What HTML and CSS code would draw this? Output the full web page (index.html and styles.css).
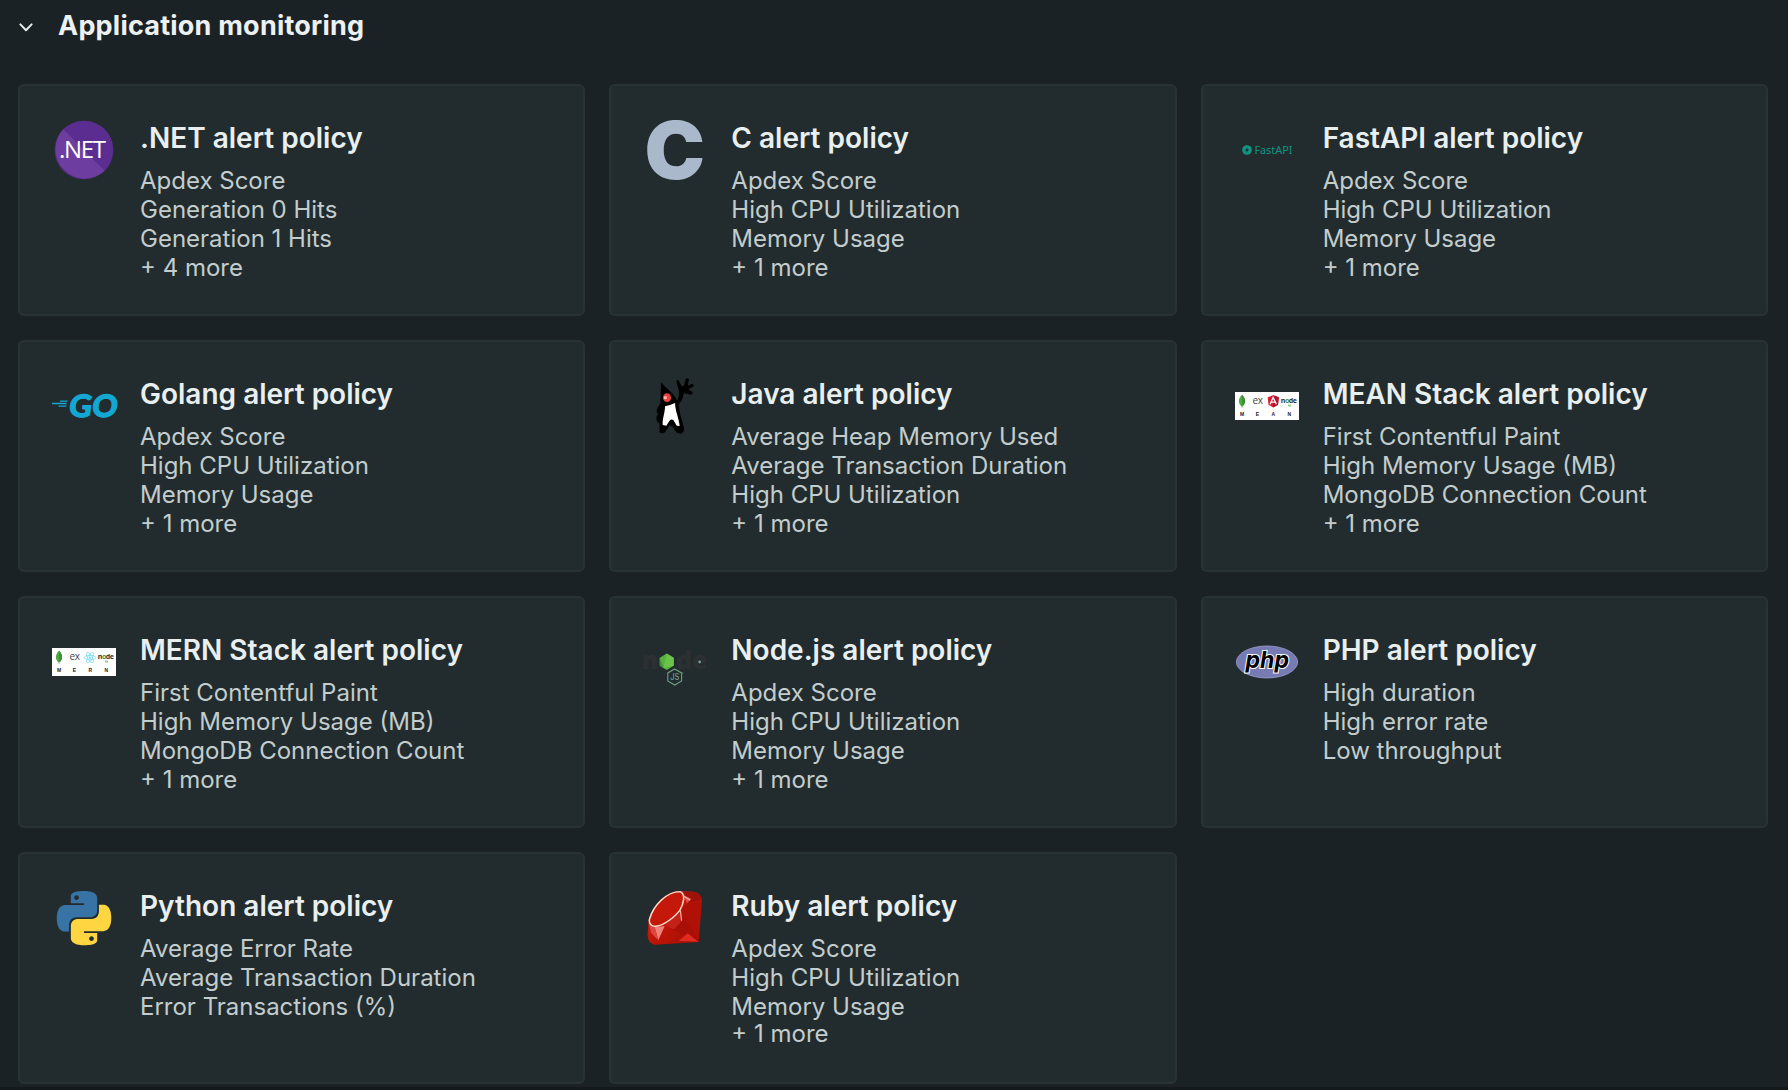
FILE: index.html
```html
<!DOCTYPE html>
<html lang="en">
<head>
<meta charset="utf-8">
<title>Application monitoring</title>
<link rel="stylesheet" href="styles.css">
</head>
<body>
<main class="page">
  <header class="section-header">
    <svg class="chevron" viewBox="0 0 14 10"><path d="M1.4 1.4 7 7.2 12.6 1.4"/></svg>
    <h1 class="section-title">Application monitoring</h1>
  </header>
  <section class="grid">
    <article class="card">
      <svg class="icon" viewBox="0 0 64 64">
        <circle cx="32" cy="32" r="29.3" fill="#5c2d91"/>
        <path d="M11.3 11.3A29.3 29.3 0 0 0 52.7 52.7Z" fill="#6d3da0"/>
        <text class="dotnet" x="7" y="40.3" textLength="47">.NET</text>
      </svg>
      <div class="body"><h2 class="title">.NET alert policy</h2>
        <ul class="list"><li>Apdex Score</li><li>Generation 0 Hits</li><li>Generation 1 Hits</li><li>+ 4 more</li></ul></div>
    </article>
    <article class="card">
      <svg class="icon" viewBox="0 0 64 64"><text class="c-mark" x="1.6" y="61.3" textLength="60.5" lengthAdjust="spacingAndGlyphs">C</text></svg>
      <div class="body"><h2 class="title">C alert policy</h2>
        <ul class="list"><li>Apdex Score</li><li>High CPU Utilization</li><li>Memory Usage</li><li>+ 1 more</li></ul></div>
    </article>
    <article class="card">
      <svg class="icon" viewBox="0 0 64 64">
        <circle cx="12" cy="32" r="4.8" fill="#109582"/>
        <path d="M12.6 28.8 10 32.7h1.8l-.6 2.8 2.8-4.2h-1.8Z" fill="#222c2e"/>
        <text class="fastapi" x="19.4" y="35.8" textLength="38" lengthAdjust="spacingAndGlyphs">FastAPI</text>
      </svg>
      <div class="body"><h2 class="title">FastAPI alert policy</h2>
        <ul class="list"><li>Apdex Score</li><li>High CPU Utilization</li><li>Memory Usage</li><li>+ 1 more</li></ul></div>
    </article>

    <article class="card">
      <svg class="icon" viewBox="0 0 64 64">
        <path d="M8 27.1h7.5M0 29.5h14.5M6.5 32.1h8" stroke="#13a8d4" stroke-width="1.3"/>
        <text class="go" transform="translate(16 43.2) skewX(-7)" textLength="48.5" lengthAdjust="spacingAndGlyphs">GO</text>
      </svg>
      <div class="body"><h2 class="title">Golang alert policy</h2>
        <ul class="list"><li>Apdex Score</li><li>High CPU Utilization</li><li>Memory Usage</li><li>+ 1 more</li></ul></div>
    </article>
    <article class="card">
      <svg class="icon" viewBox="0 0 64 64">
        <g transform="translate(-8.3 -9) scale(.3333)">
          <path d="M79 52C87 62 106 78 117 90L127 106C134 98 133 86 132 76L125 49Q126 43 131 45L141 64 148 62 153 41Q159 37 163 43L159 62 173 56Q179 59 175 65L161 73 174 82Q174 89 168 89L148 84C145 96 142 108 132 119L137 151 148 188Q149 202 139 206L126 203 113 185 105 181 91 202Q80 208 74 201L75 176 66 167 65 156 70 148 65 139 70 125 77 116Z" fill="#000"/>
          <path d="M91 124Q106 121 121 114C122 140 132 158 135 183L126 182 116 165Q110 161 104 168L95 182 84 180C83 159 91 144 91 124Z" fill="#fff"/>
          <ellipse cx="97" cy="98" rx="12" ry="13" fill="#e5433f"/><circle cx="92" cy="98" r="5" fill="#ffb2a5"/>
        </g>
      </svg>
      <div class="body"><h2 class="title">Java alert policy</h2>
        <ul class="list"><li>Average Heap Memory Used</li><li>Average Transaction Duration</li><li>High CPU Utilization</li><li>+ 1 more</li></ul></div>
    </article>
    <article class="card">
      <svg class="icon" viewBox="0 0 64 64">
        <rect y="18" width="64" height="28" fill="#fff"/>
        <path d="M7 20.8C11.3 25 11 29.5 7.3 32.4V34H6.7V32.4C3 29.5 2.8 25 7 20.8Z" fill="#4faa41"/><path d="M7 20.8C11.3 25 11 29.5 7.3 32.4Z" fill="#3f8f38"/>
        <text class="express" x="17.5" y="30.4">ex</text>
        <path d="M38.2 21.2 43.8 23.2 43 30.7 38.2 33.5 33.5 30.7 32.7 23.2Z" fill="#dd1b30"/><path d="M38.2 21.2 43.8 23.2 43 30.7 38.2 33.5Z" fill="#b3122c"/>
        <path d="M35 30.2 38.2 23.4 41.4 30.2M36.4 28.1H40" fill="none" stroke="#fff" stroke-width="1.2"/>
        <text class="node-small" x="45.8" y="29.3" textLength="16">n<tspan fill="#3f9641">o</tspan>de</text><path d="M53 30.5h3v2h-3z" fill="#9acb91"/>
        <g class="initials"><text x="7" y="42">M</text><text x="22.3" y="42">E</text><text x="38.3" y="42">A</text><text x="54.3" y="42">N</text></g>
      </svg>
      <div class="body"><h2 class="title">MEAN Stack alert policy</h2>
        <ul class="list"><li>First Contentful Paint</li><li>High Memory Usage (MB)</li><li>MongoDB Connection Count</li><li>+ 1 more</li></ul></div>
    </article>

    <article class="card">
      <svg class="icon" viewBox="0 0 64 64">
        <rect y="18" width="64" height="28" fill="#fff"/>
        <path d="M7 20.8C11.3 25 11 29.5 7.3 32.4V34H6.7V32.4C3 29.5 2.8 25 7 20.8Z" fill="#4faa41"/><path d="M7 20.8C11.3 25 11 29.5 7.3 32.4Z" fill="#3f8f38"/>
        <text class="express" x="17.5" y="30.4">ex</text>
        <g transform="translate(38 27.6)" fill="none" stroke="#7bdcf5" stroke-width=".8"><ellipse rx="5.8" ry="2.2"/><ellipse rx="5.8" ry="2.2" transform="rotate(60)"/><ellipse rx="5.8" ry="2.2" transform="rotate(120)"/><circle r=".8" fill="#61dafb"/></g>
        <text class="node-small" x="45.8" y="29.3" textLength="16">n<tspan fill="#3f9641">o</tspan>de</text><path d="M53 30.5h3v2h-3z" fill="#9acb91"/>
        <g class="initials"><text x="7" y="42">M</text><text x="22.3" y="42">E</text><text x="38.3" y="42">R</text><text x="54.3" y="42">N</text></g>
      </svg>
      <div class="body"><h2 class="title">MERN Stack alert policy</h2>
        <ul class="list"><li>First Contentful Paint</li><li>High Memory Usage (MB)</li><li>MongoDB Connection Count</li><li>+ 1 more</li></ul></div>
    </article>
    <article class="card">
      <svg class="icon" viewBox="0 0 64 64">
        <text class="node-large" x="-1.5" y="38.5">n</text><text class="node-large" x="33" y="38.5">de</text>
        <path d="M23.7 23.6 30.7 27.7V35.8L23.7 40 16.7 35.8V27.7Z" fill="#55b33f"/><path d="M23.7 23.6 30.7 27.7V35.8L20.5 38Z" fill="#6cc24a"/><path d="M16.7 27.7 20.5 38 16.7 35.8Z" fill="#3f8b3d"/>
        <circle cx="56.7" cy="32" r="1.4" fill="#6f9d9a"/>
        <path d="M31.7 38.9 38.6 42.9V51L31.7 55 24.8 51V42.9Z" fill="none" stroke="#6f9d85" stroke-width="1.1"/>
        <text class="js" x="27.2" y="50.2" textLength="9" lengthAdjust="spacingAndGlyphs">JS</text><circle cx="39.7" cy="43" r=".5" fill="#609b7d"/>
      </svg>
      <div class="body"><h2 class="title">Node.js alert policy</h2>
        <ul class="list"><li>Apdex Score</li><li>High CPU Utilization</li><li>Memory Usage</li><li>+ 1 more</li></ul></div>
    </article>
    <article class="card">
      <svg class="icon" viewBox="0 0 64 64">
        <ellipse cx="32" cy="32" rx="30.6" ry="16" fill="#777bb3" stroke="#9da0cc" stroke-width=".8"/>
        <text class="php" x="10.5" y="37.5" textLength="43.5" lengthAdjust="spacingAndGlyphs">php</text>
      </svg>
      <div class="body"><h2 class="title">PHP alert policy</h2>
        <ul class="list"><li>High duration</li><li>High error rate</li><li>Low throughput</li></ul></div>
    </article>

    <article class="card">
      <svg class="icon" viewBox="0 0 64 64">
        <defs><path id="snake" d="M14.25.18l.9.2.73.26.59.3.45.32.34.34.25.34.16.33.1.3.04.26.02.2-.01.13V8.5l-.05.63-.13.55-.21.46-.26.38-.3.31-.33.25-.35.19-.35.14-.33.1-.3.07-.26.04-.21.02H8.77l-.69.05-.59.14-.5.22-.41.27-.33.32-.27.35-.2.36-.15.37-.1.35-.07.32-.04.27-.02.21v3.06H3.17l-.21-.03-.28-.07-.32-.12-.35-.18-.36-.26-.36-.36-.35-.46-.32-.59-.28-.73-.21-.88-.14-1.05-.05-1.23.06-1.22.16-1.04.24-.87.32-.71.36-.57.4-.44.42-.33.42-.24.4-.16.36-.1.32-.05.24-.01h.16l.06.01h8.16v-.83H6.18l-.01-2.75-.02-.37.05-.34.11-.31.17-.28.25-.26.31-.23.38-.2.44-.18.51-.15.58-.12.64-.1.71-.06.77-.04.84-.02 1.27.05zm-6.3 1.98l-.23.33-.08.41.08.41.23.34.33.22.41.09.41-.09.33-.22.23-.34.08-.41-.08-.41-.23-.33-.33-.22-.41-.09-.41.09z"/></defs>
        <g transform="translate(4.9 5) scale(2.26)"><use href="#snake" fill="#3873a5"/><use href="#snake" fill="#ffd542" transform="rotate(180 12 12)"/></g>
      </svg>
      <div class="body"><h2 class="title">Python alert policy</h2>
        <ul class="list"><li>Average Error Rate</li><li>Average Transaction Duration</li><li>Error Transactions (%)</li></ul></div>
    </article>
    <article class="card">
      <svg class="icon" viewBox="0 0 64 64">
        <defs><linearGradient id="ruby" x1="0" y1="0" x2="1" y2="1"><stop offset="0" stop-color="#d92a1c"/><stop offset=".5" stop-color="#bd1507"/><stop offset="1" stop-color="#a00d04"/></linearGradient></defs>
        <g transform="translate(-43.3 -6) scale(.3827 .3333)">
          <path d="M205 33 245 35Q266 39 267 60L259 186 144 194Q126 190 125 165L128 120C138 75 170 40 205 33Z" fill="url(#ruby)"/>
          <path d="M217 36 245 35Q266 39 266 60L232 68Z" fill="#9e1209"/>
          <path d="M211 92 258 184 170 138Z" fill="#a80f06"/>
          <path d="M211 92 232 68 265 65 258 180Z" fill="#b01107"/>
          <path d="M258 185 206 183 230 160Z" fill="#e02b20"/>
          <path d="M128 125 144 140 152 180 134 158Z" fill="#dd4540"/>
          <path d="M144 141 170 138 153 181Z" fill="#ef807a"/>
          <path d="M170 138 211 92 213 124 195 148Z" fill="#c42218"/>
          <path d="M219 45 240 57 228 70Z" fill="#df5147"/>
          <path d="M130 118C140 76 175 35 210 35 226 42 219 72 209 92 187 122 155 145 137 137Q128 130 130 118Z" fill="#c3180a" stroke="#fbdccb" stroke-width="4"/>
          <path d="M211 92 214 122M219 48 236 60" stroke="#f5b9a8" stroke-width="3" fill="none"/>
        </g>
      </svg>
      <div class="body"><h2 class="title">Ruby alert policy</h2>
        <ul class="list tight-end"><li>Apdex Score</li><li>High CPU Utilization</li><li>Memory Usage</li><li>+ 1 more</li></ul></div>
    </article>
  </section>
</main>
</body>
</html>
```
FILE: styles.css
```css
* { box-sizing: border-box; }
body { margin: 0; background: #1b2225; font-family: Inter, "Liberation Sans", sans-serif; }
.page { height: 1090px; padding: 0 20px 0 18px; border-bottom: 3px solid #14191c; overflow: hidden; }
.section-header { display: flex; align-items: center; height: 84px; padding: 0 0 32px 1px; gap: 25px; }
.chevron { width: 14px; height: 10px; margin-top: 3px; fill: none; stroke: #e6ebeb; stroke-width: 2; stroke-linecap: round; stroke-linejoin: round; }
.section-title { margin: 0; font-size: 27px; line-height: 32px; font-weight: 650; letter-spacing: .22px; color: #edf1f1; white-space: nowrap; }
.grid { display: grid; grid-template-columns: repeat(3, 1fr); grid-auto-rows: 232px; gap: 24px; }
.card { display: flex; gap: 24px; padding: 32px; background: #222c2e; border: 2px solid #293335; border-radius: 6px; }
.icon { width: 64px; height: 64px; flex: none; overflow: visible; }
.body { padding-top: 3px; }
.title { margin: 0 0 11px; font-size: 28px; line-height: 34px; font-weight: 600; color: #e9efef; white-space: nowrap; }
.list { margin: 0; padding: 0; list-style: none; font-size: 24px; line-height: 29px; color: #c3cdcd; white-space: nowrap; }
.tight-end li:last-child { margin-top: -2px; }
.dotnet { font: 400 24px "Open Sans", sans-serif; fill: #fff; }
.c-mark { font: 900 80px Inter, sans-serif; fill: #a9b9cb; }
.fastapi { font: 400 10.6px "Noto Sans", sans-serif; fill: #109582; }
.go { font: 900 31px Lato, sans-serif; fill: #13a8d4; stroke: #13a8d4; stroke-width: 1px; }
.express { font: 400 10px "Open Sans", sans-serif; fill: #444; letter-spacing: -.4px; }
.node-small { font: 700 7px "Open Sans", sans-serif; fill: #333; }
.initials { font: 700 5px "Liberation Sans", sans-serif; fill: #222; text-anchor: middle; }
.node-large { font: 800 25px "Open Sans", sans-serif; fill: #2c3033; }
.js { font: 500 8.5px Inter, sans-serif; fill: #6f9d85; }
.php { font: italic 700 23px Inter, sans-serif; fill: #000; stroke: #fff; stroke-width: 2px; paint-order: stroke; }
```
